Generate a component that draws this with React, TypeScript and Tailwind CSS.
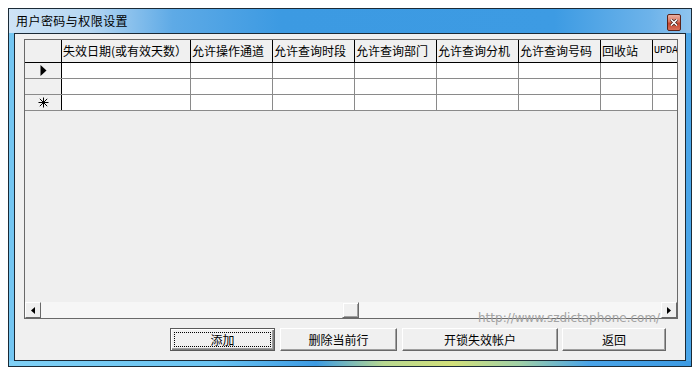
import React from "react";

function Tri({ dir }: { dir: "l" | "r" }) {
  return (
    <svg width="4" height="7" viewBox="0 0 4 7">
      {dir === "l" ? <polygon points="4,0 0,3.5 4,7" fill="#000" /> : <polygon points="0,0 4,3.5 0,7" fill="#000" />}
    </svg>
  );
}

export default function App() {
  const cols: { w: string; t: string }[] = [
    { w: "w-[129px]", t: "失效日期(或有效天数）" },
    { w: "w-[82px]", t: "允许操作通道" },
    { w: "w-[82px]", t: "允许查询时段" },
    { w: "w-[82px]", t: "允许查询部门" },
    { w: "w-[82px]", t: "允许查询分机" },
    { w: "w-[82px]", t: "允许查询号码" },
    { w: "w-[52px]", t: "回收站" },
  ];
  const rows = [0, 1, 2];
  return (
    <div className="relative w-[699px] h-[375px] bg-white overflow-hidden pt-[8px] pl-[8px] font-['Noto_Sans_CJK_SC',sans-serif] text-[12px] text-black">
      <div className="w-[684px] h-[359px] border border-[#1b2a36] flex flex-col bg-[#6cbff0]">
        {/* Title bar */}
        <div className="h-[24px] flex items-start justify-between bg-[linear-gradient(90deg,#cfe4f6_0%,#b4d6f2_12%,#5eaae6_24%,#3c9ae2_40%,#3d9be3_80%,#6db3ea_94%,#8fc4ee_100%)]">
          <div className="pl-[7px] pt-[5px] leading-[14px] text-[12px] tracking-[0.45px] text-black">用户密码与权限设置</div>
          <div className="mt-[5px] mr-[10px] w-[14px] h-[17px] border border-[#5a2218] rounded-[2px] bg-[linear-gradient(180deg,#eab0a2_0%,#d9735e_45%,#c5452d_55%,#d8705a_100%)] flex items-center justify-center">
            <svg width="8" height="7" viewBox="0 0 8 7">
              <path d="M1 0.5 L7 6.5 M7 0.5 L1 6.5" stroke="#3a1a14" strokeWidth="3" />
              <path d="M1 0.5 L7 6.5 M7 0.5 L1 6.5" stroke="#fff" strokeWidth="1.6" />
            </svg>
          </div>
        </div>
        {/* Middle */}
        <div className="flex flex-1">
          <div className="w-[5px] bg-[#74c6f2]" />
          <div className="w-[672px] h-[328px] border border-[#1b2a36] bg-[#f0f0f0] pl-[9px] pt-[5px] flex flex-col">
            {/* Grid */}
            <div className="w-[654px] h-[280px] border border-[#696969] bg-[#efefef] flex flex-col overflow-hidden">
              <div className="flex h-[23px] shrink-0 border-b border-black bg-[#f0f0f0] overflow-hidden">
                <div className="w-[37px] shrink-0 border-r border-black" />
                {cols.map((c, i) => (
                  <div key={i} className={`${c.w} shrink-0 border-r border-black pl-[1px] leading-[22px] whitespace-nowrap overflow-hidden`}>
                    {c.t}
                  </div>
                ))}
                <div className="w-[60px] shrink-0 pl-[1px] leading-[22px] whitespace-nowrap overflow-hidden font-['Liberation_Mono',monospace] text-[10px]">
                  UPDATETIME
                </div>
              </div>
              {rows.map((r) => (
                <div key={r} className="flex h-[16px] shrink-0 border-b border-[#8a8a8a] overflow-hidden">
                  <div className="w-[37px] shrink-0 border-r border-black bg-[#f0f0f0] flex items-center justify-center">
                    {r === 0 && (
                      <svg width="7" height="11" viewBox="0 0 7 11">
                        <polygon points="0.5,0 6.5,5.5 0.5,11" fill="#000" />
                      </svg>
                    )}
                    {r === 2 && (
                      <svg width="11" height="11" viewBox="0 0 11 11">
                        <path d="M5.5 0.5 V10.5 M0.5 5.5 H10.5 M1.8 1.8 L9.2 9.2 M9.2 1.8 L1.8 9.2" stroke="#000" strokeWidth="1" />
                      </svg>
                    )}
                  </div>
                  {cols.map((c, i) => (
                    <div key={i} className={`${c.w} shrink-0 border-r border-[#8a8a8a] bg-white`} />
                  ))}
                  <div className="w-[60px] shrink-0 bg-white" />
                </div>
              ))}
              <div className="flex-1" />
              {/* Horizontal scrollbar */}
              <div className="h-[16px] shrink-0 flex bg-[#f6f6f6]">
                <div className="w-[16px] h-[16px] border-t border-l border-t-white border-l-white border-r border-b border-r-[#696969] border-b-[#696969] bg-[#f0f0f0] flex items-center justify-center">
                  <Tri dir="l" />
                </div>
                <div className="flex-1 flex">
                  <div className="ml-[301px] w-[17px] h-[16px] border-t border-l border-t-[#f4f4f4] border-l-[#f4f4f4] border-r border-b border-r-[#696969] border-b-[#696969] bg-[#f0f0f0] shadow-[inset_1px_1px_0_#fff,inset_-1px_-1px_0_#a0a0a0]" />
                </div>
                <div className="w-[16px] h-[16px] border-t border-l border-t-white border-l-white border-r border-b border-r-[#696969] border-b-[#696969] bg-[#f0f0f0] flex items-center justify-center">
                  <Tri dir="r" />
                </div>
              </div>
            </div>
            {/* Buttons */}
            <div className="flex mt-[9px] ml-[146px] h-[23px]">
              <div className="w-[105px] h-[23px] border border-[#5a5a5a] bg-[#f0f0f0] shadow-[inset_1px_1px_0_#fff,inset_-1px_-1px_0_#808080,inset_-2px_-2px_0_#a0a0a0] p-[3px]">
                <div className="w-full h-full border border-dotted border-black flex items-center justify-center leading-none">添加</div>
              </div>
              <div className="ml-[5px] w-[117px] h-[23px] border border-t-white border-l-white border-r-[#696969] border-b-[#696969] bg-[#f0f0f0] shadow-[inset_-1px_-1px_0_#a0a0a0] flex items-center justify-center leading-none">删除当前行</div>
              <div className="ml-[5px] w-[156px] h-[23px] border border-t-white border-l-white border-r-[#696969] border-b-[#696969] bg-[#f0f0f0] shadow-[inset_-1px_-1px_0_#a0a0a0] flex items-center justify-center leading-none">开锁失效帐户</div>
              <div className="ml-[4px] w-[104px] h-[23px] border border-t-white border-l-white border-r-[#696969] border-b-[#696969] bg-[#f0f0f0] shadow-[inset_-1px_-1px_0_#a0a0a0] flex items-center justify-center leading-none">返回</div>
            </div>
          </div>
          <div className="w-[5px] bg-[#4aa5e8]" />
        </div>
        <div className="h-[5px] bg-[linear-gradient(90deg,#7fd0f5_0%,#6ac4f2_30%,#3d9be3_45%,#b8d890_55%,#d2e07a_65%,#9fd0a8_75%,#4aa4e8_85%,#3d9be3_100%)]" />
      </div>
      <div className="absolute left-[478px] top-[311px] font-['DejaVu_Sans',sans-serif] text-[12px] leading-[15px] text-[#a3a3a3] whitespace-nowrap">
        http://www.szdictaphone.com/
      </div>
    </div>
  );
}
